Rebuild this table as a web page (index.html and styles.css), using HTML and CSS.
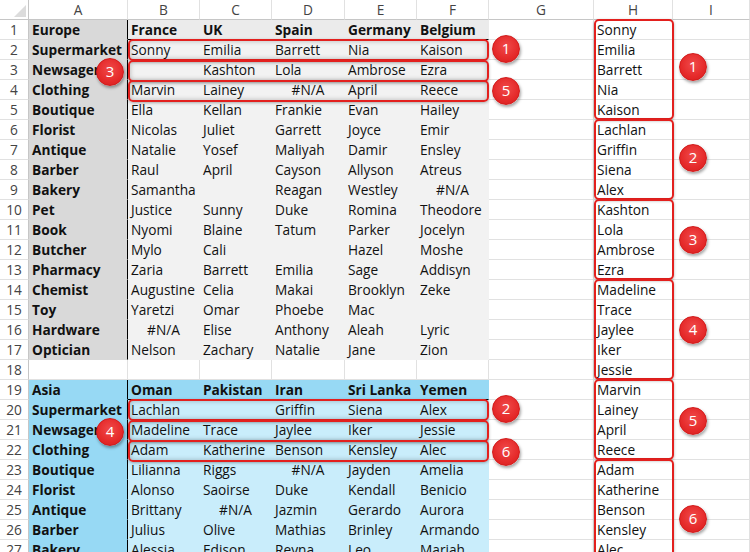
FILE: index.html
```html
<!DOCTYPE html>
<html>
<head>
<meta charset="utf-8">
<link rel="stylesheet" href="styles.css">
</head>
<body>
<div class="sheet">
  <div class="row colhead">
    <div class="corner"><svg width="29" height="20" viewBox="0 0 29 20"><polygon points="26,5 26,17 14,17" fill="#dcdcdc"/></svg></div>
    <div class="ch">A</div><div class="ch">B</div><div class="ch">C</div><div class="ch">D</div><div class="ch">E</div><div class="ch">F</div><div class="ch">G</div><div class="ch">H</div><div class="ch">I</div>
  </div>
  <div class="row"><div class="rh">1</div><div class="ea">Europe</div><div class="eh">France</div><div class="eh">UK</div><div class="eh">Spain</div><div class="eh">Germany</div><div class="eh">Belgium</div><div class="c"></div><div class="c">Sonny</div><div class="c"></div></div>
  <div class="row"><div class="rh">2</div><div class="ea">Supermarket</div><div class="eb">Sonny</div><div class="eb">Emilia</div><div class="eb">Barrett</div><div class="eb">Nia</div><div class="eb">Kaison</div><div class="c"></div><div class="c">Emilia</div><div class="c"></div></div>
  <div class="row"><div class="rh">3</div><div class="ea">Newsagent</div><div class="eb"></div><div class="eb">Kashton</div><div class="eb">Lola</div><div class="eb">Ambrose</div><div class="eb">Ezra</div><div class="c"></div><div class="c">Barrett</div><div class="c"></div></div>
  <div class="row"><div class="rh">4</div><div class="ea">Clothing</div><div class="eb">Marvin</div><div class="eb">Lainey</div><div class="eb na">#N/A</div><div class="eb">April</div><div class="eb">Reece</div><div class="c"></div><div class="c">Nia</div><div class="c"></div></div>
  <div class="row"><div class="rh">5</div><div class="ea">Boutique</div><div class="eb">Ella</div><div class="eb">Kellan</div><div class="eb">Frankie</div><div class="eb">Evan</div><div class="eb">Hailey</div><div class="c"></div><div class="c">Kaison</div><div class="c"></div></div>
  <div class="row"><div class="rh">6</div><div class="ea">Florist</div><div class="eb">Nicolas</div><div class="eb">Juliet</div><div class="eb">Garrett</div><div class="eb">Joyce</div><div class="eb">Emir</div><div class="c"></div><div class="c">Lachlan</div><div class="c"></div></div>
  <div class="row"><div class="rh">7</div><div class="ea">Antique</div><div class="eb">Natalie</div><div class="eb">Yosef</div><div class="eb">Maliyah</div><div class="eb">Damir</div><div class="eb">Ensley</div><div class="c"></div><div class="c">Griffin</div><div class="c"></div></div>
  <div class="row"><div class="rh">8</div><div class="ea">Barber</div><div class="eb">Raul</div><div class="eb">April</div><div class="eb">Cayson</div><div class="eb">Allyson</div><div class="eb">Atreus</div><div class="c"></div><div class="c">Siena</div><div class="c"></div></div>
  <div class="row"><div class="rh">9</div><div class="ea">Bakery</div><div class="eb">Samantha</div><div class="eb"></div><div class="eb">Reagan</div><div class="eb">Westley</div><div class="eb na">#N/A</div><div class="c"></div><div class="c">Alex</div><div class="c"></div></div>
  <div class="row"><div class="rh">10</div><div class="ea">Pet</div><div class="eb">Justice</div><div class="eb">Sunny</div><div class="eb">Duke</div><div class="eb">Romina</div><div class="eb">Theodore</div><div class="c"></div><div class="c">Kashton</div><div class="c"></div></div>
  <div class="row"><div class="rh">11</div><div class="ea">Book</div><div class="eb">Nyomi</div><div class="eb">Blaine</div><div class="eb">Tatum</div><div class="eb">Parker</div><div class="eb">Jocelyn</div><div class="c"></div><div class="c">Lola</div><div class="c"></div></div>
  <div class="row"><div class="rh">12</div><div class="ea">Butcher</div><div class="eb">Mylo</div><div class="eb">Cali</div><div class="eb"></div><div class="eb">Hazel</div><div class="eb">Moshe</div><div class="c"></div><div class="c">Ambrose</div><div class="c"></div></div>
  <div class="row"><div class="rh">13</div><div class="ea">Pharmacy</div><div class="eb">Zaria</div><div class="eb">Barrett</div><div class="eb">Emilia</div><div class="eb">Sage</div><div class="eb">Addisyn</div><div class="c"></div><div class="c">Ezra</div><div class="c"></div></div>
  <div class="row"><div class="rh">14</div><div class="ea">Chemist</div><div class="eb">Augustine</div><div class="eb">Celia</div><div class="eb">Makai</div><div class="eb">Brooklyn</div><div class="eb">Zeke</div><div class="c"></div><div class="c">Madeline</div><div class="c"></div></div>
  <div class="row"><div class="rh">15</div><div class="ea">Toy</div><div class="eb">Yaretzi</div><div class="eb">Omar</div><div class="eb">Phoebe</div><div class="eb">Mac</div><div class="eb"></div><div class="c"></div><div class="c">Trace</div><div class="c"></div></div>
  <div class="row"><div class="rh">16</div><div class="ea">Hardware</div><div class="eb na">#N/A</div><div class="eb">Elise</div><div class="eb">Anthony</div><div class="eb">Aleah</div><div class="eb">Lyric</div><div class="c"></div><div class="c">Jaylee</div><div class="c"></div></div>
  <div class="row"><div class="rh">17</div><div class="ea">Optician</div><div class="eb">Nelson</div><div class="eb">Zachary</div><div class="eb">Natalie</div><div class="eb">Jane</div><div class="eb">Zion</div><div class="c"></div><div class="c">Iker</div><div class="c"></div></div>
  <div class="row"><div class="rh">18</div><div class="c"></div><div class="c"></div><div class="c"></div><div class="c"></div><div class="c"></div><div class="c"></div><div class="c"></div><div class="c">Jessie</div><div class="c"></div></div>
  <div class="row"><div class="rh">19</div><div class="aa">Asia</div><div class="ah">Oman</div><div class="ah">Pakistan</div><div class="ah">Iran</div><div class="ah">Sri Lanka</div><div class="ah">Yemen</div><div class="c"></div><div class="c">Marvin</div><div class="c"></div></div>
  <div class="row"><div class="rh">20</div><div class="aa">Supermarket</div><div class="ab">Lachlan</div><div class="ab"></div><div class="ab">Griffin</div><div class="ab">Siena</div><div class="ab">Alex</div><div class="c"></div><div class="c">Lainey</div><div class="c"></div></div>
  <div class="row"><div class="rh">21</div><div class="aa">Newsagent</div><div class="ab">Madeline</div><div class="ab">Trace</div><div class="ab">Jaylee</div><div class="ab">Iker</div><div class="ab">Jessie</div><div class="c"></div><div class="c">April</div><div class="c"></div></div>
  <div class="row"><div class="rh">22</div><div class="aa">Clothing</div><div class="ab">Adam</div><div class="ab">Katherine</div><div class="ab">Benson</div><div class="ab">Kensley</div><div class="ab">Alec</div><div class="c"></div><div class="c">Reece</div><div class="c"></div></div>
  <div class="row"><div class="rh">23</div><div class="aa">Boutique</div><div class="ab">Lilianna</div><div class="ab">Riggs</div><div class="ab na">#N/A</div><div class="ab">Jayden</div><div class="ab">Amelia</div><div class="c"></div><div class="c">Adam</div><div class="c"></div></div>
  <div class="row"><div class="rh">24</div><div class="aa">Florist</div><div class="ab">Alonso</div><div class="ab">Saoirse</div><div class="ab">Duke</div><div class="ab">Kendall</div><div class="ab">Benicio</div><div class="c"></div><div class="c">Katherine</div><div class="c"></div></div>
  <div class="row"><div class="rh">25</div><div class="aa">Antique</div><div class="ab">Brittany</div><div class="ab na">#N/A</div><div class="ab">Jazmin</div><div class="ab">Gerardo</div><div class="ab">Aurora</div><div class="c"></div><div class="c">Benson</div><div class="c"></div></div>
  <div class="row"><div class="rh">26</div><div class="aa">Barber</div><div class="ab">Julius</div><div class="ab">Olive</div><div class="ab">Mathias</div><div class="ab">Brinley</div><div class="ab">Armando</div><div class="c"></div><div class="c">Kensley</div><div class="c"></div></div>
  <div class="row"><div class="rh">27</div><div class="aa">Bakery</div><div class="ab">Alessia</div><div class="ab">Edison</div><div class="ab">Reyna</div><div class="ab">Leo</div><div class="ab">Mariah</div><div class="c"></div><div class="c">Alec</div><div class="c"></div></div>

  <div class="box rowbox b-r2"></div>
  <div class="box rowbox b-r3"></div>
  <div class="box rowbox b-r4"></div>
  <div class="box rowbox b-r20"></div>
  <div class="box rowbox b-r21"></div>
  <div class="box rowbox b-r22"></div>

  <div class="box colbox b-h1"></div>
  <div class="box colbox b-h2"></div>
  <div class="box colbox b-h3"></div>
  <div class="box colbox b-h4"></div>
  <div class="box colbox b-h5"></div>
  <div class="box colbox b-h6"></div>

  <div class="badge g-l1">1</div>
  <div class="badge g-l5">5</div>
  <div class="badge g-l3">3</div>
  <div class="badge g-l2">2</div>
  <div class="badge g-l4">4</div>
  <div class="badge g-l6">6</div>
  <div class="badge g-r1">1</div>
  <div class="badge g-r2">2</div>
  <div class="badge g-r3">3</div>
  <div class="badge g-r4">4</div>
  <div class="badge g-r5">5</div>
  <div class="badge g-r6">6</div>
</div>
</body>
</html>
```

FILE: styles.css
```css
html, body {
  margin: 0;
  padding: 0;
  background: #fff;
  overflow: hidden;
}
.sheet {
  position: relative;
  width: 750px;
  font-family: "Open Sans", "Noto Sans", sans-serif;
  font-size: 13.7px;
  color: #111;
}
.row {
  display: grid;
  grid-template-columns: 29px 99px 72px 72px 73px 72px 72px 105px 79px 77px;
  height: 20px;
}
.row > div {
  box-sizing: border-box;
  height: 20px;
  line-height: 19px;
  padding-left: 3px;
  white-space: nowrap;
  overflow: visible;
  border-right: 1px solid #e1e1e1;
  border-bottom: 1px solid #e1e1e1;
}
.colhead > div {
  text-align: center;
  padding-left: 0;
  color: #444;
  background: #fff;
  border-bottom-color: #c6c6c6;
}
.corner {
  padding: 0 !important;
  line-height: 0 !important;
  border-right-color: #c6c6c6 !important;
}
.row > .rh {
  text-align: center;
  padding-left: 0;
  color: #444;
  border-right-color: #c6c6c6;
}
.ea, .aa {
  font-weight: 700;
  border-bottom-color: transparent !important;
  border-right: 1px solid #000 !important;
}
.ea { background: #d9d9d9; }
.aa { background: #97d9f4; }
.eb, .eh, .ab, .ah {
  border-color: transparent !important;
}
.eb { background: #f2f2f2; }
.ab { background: #c9edfb; }
.eh, .ah {
  font-weight: 700;
  border-bottom: 1px solid #000 !important;
}
.eh { background: #ebebeb; }
.ah { background: #97d9f4; }
.row > .na {
  text-align: center;
  padding-left: 0;
}

.box {
  position: absolute;
  box-sizing: border-box;
  border: 2px solid #e3201e;
  border-radius: 5px;
}
.rowbox {
  left: 128px;
  width: 361px;
  height: 22px;
  box-shadow: inset 0 0 5px rgba(0, 0, 0, 0.25), 0 1px 3px rgba(0, 0, 0, 0.3);
}
.b-r2 { top: 39px; }
.b-r3 { top: 60px; }
.b-r4 { top: 80px; }
.b-r20 { top: 399px; }
.b-r21 { top: 420px; }
.b-r22 { top: 440px; }

.colbox {
  left: 594px;
  width: 80px;
  box-shadow: 0 1px 3px rgba(0, 0, 0, 0.3);
}
.b-h1 { top: 19px; height: 101px; }
.b-h2 { top: 119px; height: 81px; }
.b-h3 { top: 199px; height: 81px; }
.b-h4 { top: 279px; height: 101px; }
.b-h5 { top: 379px; height: 81px; }
.b-h6 { top: 459px; height: 110px; }

.badge {
  position: absolute;
  width: 28px;
  height: 28px;
  margin-left: -14px;
  margin-top: -14px;
  box-sizing: border-box;
  border-radius: 50%;
  border: 1.5px solid #d11a1a;
  background: radial-gradient(circle at 50% 40%, #f04a4a 0%, #e52a2a 60%, #d41d1d 100%);
  box-shadow: 1px 2px 3px rgba(0, 0, 0, 0.35);
  color: #fff;
  font-family: "Open Sans", sans-serif;
  font-size: 15px;
  line-height: 25px;
  text-align: center;
}
.g-l1 { left: 506px; top: 49px; }
.g-l5 { left: 506px; top: 91px; }
.g-l3 { left: 110px; top: 72px; }
.g-l2 { left: 506px; top: 409px; }
.g-l4 { left: 110px; top: 432px; }
.g-l6 { left: 506px; top: 452px; }
.g-r1 { left: 693px; top: 67px; }
.g-r2 { left: 693px; top: 158px; }
.g-r3 { left: 693px; top: 240px; }
.g-r4 { left: 693px; top: 330px; }
.g-r5 { left: 693px; top: 421px; }
.g-r6 { left: 693px; top: 519px; }
```
